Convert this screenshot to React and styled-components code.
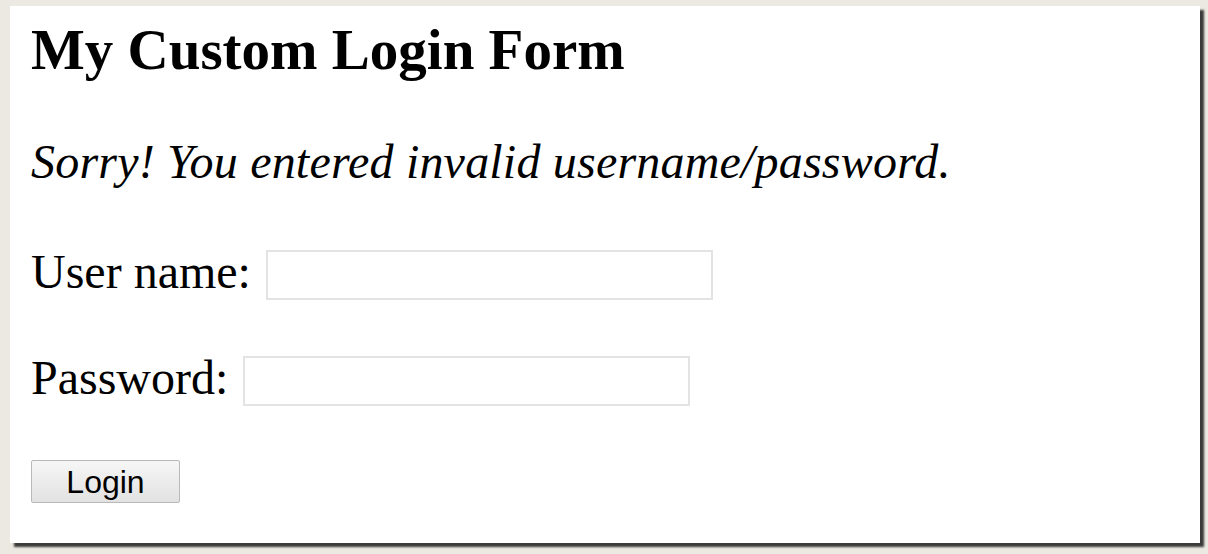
import styled, { createGlobalStyle } from "styled-components";

const GlobalStyle = createGlobalStyle`
  html, body {
    margin: 0;
    padding: 0;
    height: 100%;
    background: #ece9e2;
  }
  body {
    padding: 6px 0 0 10px;
    box-sizing: border-box;
    font-family: "Liberation Serif", "Times New Roman", serif;
    color: #000;
  }
`;

export default function App() {
  return (
    <>
      <GlobalStyle />
      <Panel>
        <Title>My Custom Login Form</Title>
        <ErrorText>Sorry! You entered invalid username/password.</ErrorText>
        <Form onSubmit={(e) => e.preventDefault()}>
          <Row>
            <Label htmlFor="username">User name:</Label>
            <TextInput id="username" type="text" />
          </Row>
          <Row>
            <Label htmlFor="password">Password:</Label>
            <TextInput id="password" type="password" />
          </Row>
          <LoginButton type="submit">Login</LoginButton>
        </Form>
      </Panel>
    </>
  );
}

const Panel = styled.div`
  width: 1190px;
  height: 537px;
  box-sizing: border-box;
  background: #fff;
  box-shadow: 4px 4px 2px #3a3a3a;
  padding: 15px 0 0 21px;
  display: flex;
  flex-direction: column;
`;

const Title = styled.h1`
  margin: 0;
  font-size: 57px;
  line-height: 57px;
  font-weight: bold;
`;

const ErrorText = styled.p`
  margin: 60px 0 0;
  font-size: 48px;
  line-height: 48px;
  font-style: italic;
  letter-spacing: 0.2px;
`;

const Form = styled.form`
  margin-top: 64px;
  display: flex;
  flex-direction: column;
  align-items: flex-start;
`;

const Row = styled.div`
  display: flex;
  align-items: center;
  gap: 15px;
  margin-bottom: 56px;

  &:last-of-type {
    margin-bottom: 54px;
  }
`;

const Label = styled.label`
  font-size: 48px;
  line-height: 42px;
  padding-bottom: 6px;
`;

const TextInput = styled.input`
  width: 447px;
  height: 50px;
  box-sizing: border-box;
  border: 2px solid #e3e3e3;
  background: #fff;
  outline: none;
  font-size: 28px;
`;

const LoginButton = styled.button`
  width: 149px;
  height: 43px;
  box-sizing: border-box;
  border: 1px solid #b9b9b9;
  border-radius: 2px;
  background: linear-gradient(#f6f6f6, #e2e2e2);
  font-family: "Liberation Sans", Arial, sans-serif;
  font-size: 32px;
  line-height: 1;
  color: #000;
  padding: 0;
`;
